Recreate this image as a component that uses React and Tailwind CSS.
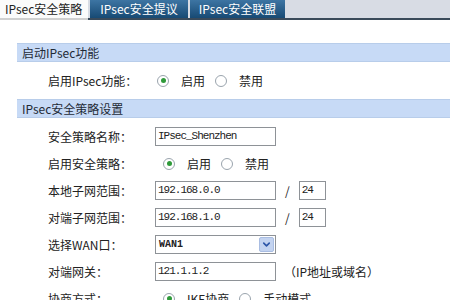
import { ChevronDown } from 'lucide-react';

const CN = { fontFamily: '"Noto Sans CJK SC", "Noto Sans", sans-serif' };
const MONO = { fontFamily: '"Liberation Mono", "Noto Sans CJK SC", monospace' };

function Radio({ checked }) {
  return (
    <span className="w-[12px] h-[12px] rounded-full border border-[#9aa4ad] bg-white flex items-center justify-center shrink-0">
      {checked && <span className="w-[5px] h-[5px] rounded-full bg-[#2f9a3a]" />}
    </span>
  );
}

function RadioPair({ a, b }) {
  return (
    <div className="flex items-center text-[12px] text-[#222]">
      <Radio checked />
      <span className="ml-[12px]">{a}</span>
      <span className="ml-[10px]"><Radio /></span>
      <span className="ml-[12px]">{b}</span>
    </div>
  );
}

function Field({ value, w = 'w-[121px]' }) {
  return (
    <div className={`${w} h-[19px] border border-[#8e9297] bg-white flex items-center px-[2px] text-[11px] tracking-[-1px] text-[#222]`} style={MONO}>
      {value}
    </div>
  );
}

function Row({ label, children }) {
  return (
    <div className="h-[27px] flex items-center">
      <div className="w-[107px] pl-[31px] text-[12px] text-[#222] whitespace-nowrap">{label}</div>
      {children}
    </div>
  );
}

function Header({ children }) {
  return (
    <div className="h-[19px] bg-[#c7daf6] border-y border-[#b8cdea] flex items-center pl-[5px] text-[12px] text-[#1f2a36]">
      {children}
    </div>
  );
}

export default function App() {
  return (
    <div className="w-[450px] h-[300px] bg-white overflow-hidden" style={CN}>
      <div className="h-[20px] bg-[#d8dce4] flex border-b-2 border-[#3a4a5a]">
        <div className="w-[88px] -mb-[2px] bg-[#fbfbfb] flex items-center pl-[5px] text-[12px] text-[#222] border-b-2 border-[#d0d0d0]">IPsec安全策略</div>
        <div className="ml-[2px] w-[98px] bg-gradient-to-b from-[#3d75a3] to-[#174a74] flex items-center justify-center text-[12px] text-white">IPsec安全提议</div>
        <div className="ml-[2px] w-[95px] bg-gradient-to-b from-[#3d75a3] to-[#174a74] flex items-center justify-center text-[12px] text-white">IPsec安全联盟</div>
      </div>

      <div className="ml-[17px] mt-[23px]">
        <Header>启动IPsec功能</Header>
        <div className="h-[37px] flex items-center">
          <div className="w-[140px] pl-[31px] text-[12px] text-[#222]">启用IPsec功能：</div>
          <RadioPair a="启用" b="禁用" />
        </div>
        <Header>IPsec安全策略设置</Header>
        <div className="pt-[5px]">
          <Row label="安全策略名称：">
            <div className="ml-[31px]"><Field value="IPsec_Shenzhen" /></div>
          </Row>
          <Row label="启用安全策略：">
            <div className="ml-[39px]"><RadioPair a="启用" b="禁用" /></div>
          </Row>
          <Row label="本地子网范围：">
            <div className="ml-[31px] flex items-center">
              <Field value="192.168.0.0" />
              <span className="mx-[9px] text-[12px] text-[#222]">/</span>
              <Field value="24" w="w-[27px]" />
            </div>
          </Row>
          <Row label="对端子网范围：">
            <div className="ml-[31px] flex items-center">
              <Field value="192.168.1.0" />
              <span className="mx-[9px] text-[12px] text-[#222]">/</span>
              <Field value="24" w="w-[27px]" />
            </div>
          </Row>
          <Row label="选择WAN口：">
            <div className="ml-[31px] w-[121px] h-[19px] border border-[#8e9297] bg-white flex items-center justify-between pl-[3px] pr-[1px]">
              <span className="text-[10px] font-bold text-[#222]" style={MONO}>WAN1</span>
              <span className="w-[15px] h-[15px] bg-[#c3d3f0] border border-[#a9bde2] rounded-[2px] flex items-center justify-center">
                <ChevronDown size={11} strokeWidth={3.5} className="text-[#2c55a8]" />
              </span>
            </div>
          </Row>
          <Row label="对端网关：">
            <div className="ml-[31px] flex items-center">
              <Field value="121.1.1.2" />
              <span className="ml-[8px] text-[12px] text-[#222]">（IP地址或域名）</span>
            </div>
          </Row>
          <Row label="协商方式：">
            <div className="ml-[39px]"><RadioPair a="IKE协商" b="手动模式" /></div>
          </Row>
        </div>
      </div>
    </div>
  );
}
